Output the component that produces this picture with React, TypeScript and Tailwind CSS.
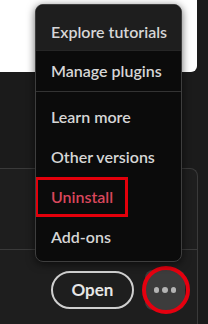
import React from "react";

const ITEMS_TOP = ["Explore tutorials", "Manage plugins"];
const ITEMS_BOTTOM = ["Learn more", "Other versions", "Uninstall", "Add-ons"];

export default function App() {
  return (
    <div
      className="relative w-[208px] h-[324px] overflow-hidden bg-[#1b1b1b]"
      style={{ fontFamily: "Lato, 'Open Sans', sans-serif" }}
    >
      {/* White card above */}
      <div className="w-[197px] h-[72px] bg-white rounded-br-md" />

      {/* App card */}
      <div className="mt-[96px] w-[198px] h-[156px] border-t border-r border-[#3a3a3a] rounded-tr-lg bg-[#1e1e1e]">
        <div className="h-[81px] border-b border-[#3a3a3a]" />
        <div className="flex items-center justify-end gap-[11px] pr-[12px] pt-[20px]">
          <button className="w-[83px] h-[38px] rounded-full border-2 border-[#cfcfcf] text-[17px] font-bold text-[#e6e6e6]">
            Open
          </button>
          <button className="w-[40px] h-[40px] rounded-lg bg-[#3c3c3c] flex items-center justify-center gap-[3px]">
            <span className="w-[5.5px] h-[5.5px] rounded-full bg-[#b4b4b4]" />
            <span className="w-[5.5px] h-[5.5px] rounded-full bg-[#b4b4b4]" />
            <span className="w-[5.5px] h-[5.5px] rounded-full bg-[#b4b4b4]" />
          </button>
        </div>
      </div>

      {/* Red highlight around the more button */}
      <div className="absolute left-[142px] top-[266px] w-[48px] h-[48px] rounded-full border-4 border-[#e5000f]" />

      {/* Dropdown menu */}
      <div className="absolute left-[35px] top-[4px] w-[147px] h-[258px] rounded-lg border border-[#3e3e3e] bg-[#0b0b0b] shadow-[0_2px_8px_rgba(0,0,0,0.6)] overflow-hidden">
        <div className="h-[46px] pt-[8px] flex items-center pl-[15px] bg-[#1e1e1e] border-b border-[#262626] text-[16px] font-semibold text-[#d6d6d6]">
          {ITEMS_TOP[0]}
        </div>
        <div className="h-[41px] flex items-center pl-[15px] border-b border-[#333333] text-[16px] font-semibold text-[#d6d6d6]">
          {ITEMS_TOP[1]}
        </div>
        <div className="pt-[5px]">
          {ITEMS_BOTTOM.map((label) =>
            label === "Uninstall" ? (
              <div
                key={label}
                className="h-[40px] w-[93px] -ml-px flex items-center pl-[13px] border-[3px] border-[#e3000b] text-[16px] font-semibold text-[#d9475c]"
              >
                {label}
              </div>
            ) : (
              <div
                key={label}
                className="h-[40px] flex items-center pl-[15px] text-[16px] font-semibold text-[#d6d6d6]"
              >
                {label}
              </div>
            )
          )}
        </div>
      </div>
    </div>
  );
}
